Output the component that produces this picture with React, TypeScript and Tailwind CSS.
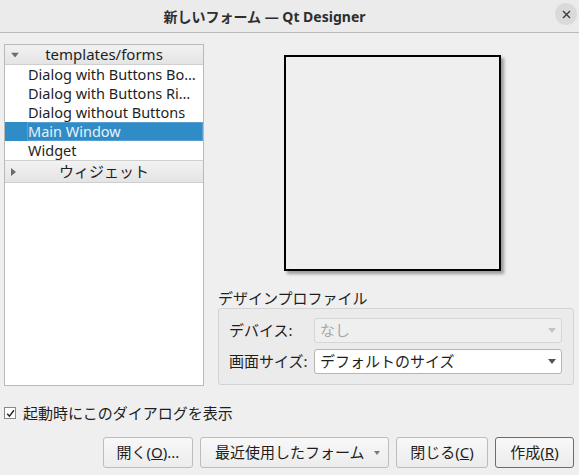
const font = { fontFamily: '"Noto Sans", "Noto Sans CJK JP", sans-serif' }

const templates = [
  'Dialog with Buttons Bo…',
  'Dialog with Buttons Ri…',
  'Dialog without Buttons',
  'Main Window',
  'Widget',
]

function Caret({ open }: { open: boolean }) {
  return open ? (
    <svg width="8" height="5" viewBox="0 0 8 5" className="text-[#6b6b6b]">
      <path d="M0 0h8L4 5z" fill="currentColor" />
    </svg>
  ) : (
    <svg width="5" height="8" viewBox="0 0 5 8" className="text-[#6b6b6b]">
      <path d="M0 0v8l5-4z" fill="currentColor" />
    </svg>
  )
}

function TreeHeader({ label, open, h }: { label: string; open: boolean; h: string }) {
  return (
    <div
      className={`relative flex items-center justify-center border-b border-[#cfcfcf] bg-gradient-to-b from-[#f2f2f2] to-[#e4e4e4] text-[15px] leading-none text-[#1e1e1e] ${h}`}
    >
      <span className="absolute left-[6px] top-1/2 flex -translate-y-1/2">
        <Caret open={open} />
      </span>
      {label}
    </div>
  )
}

function Combo({ value, disabled }: { value: string; disabled?: boolean }) {
  return (
    <div
      className={`flex h-[25px] flex-1 items-center justify-between rounded-[3px] border px-[5px] text-[15px] ${
        disabled
          ? 'border-[#d6d6d6] bg-[#efefef] text-[#a8a8a8]'
          : 'border-[#b5b5b5] bg-white text-[#1e1e1e]'
      }`}
    >
      <span>{value}</span>
      <svg width="8" height="5" viewBox="0 0 8 5" className={disabled ? 'text-[#c4c4c4]' : 'text-[#555]'}>
        <path d="M0 0h8L4 5z" fill="currentColor" />
      </svg>
    </div>
  )
}

function Button({ children, w, primary }: { children: React.ReactNode; w: string; primary?: boolean }) {
  return (
    <div
      className={`flex h-[31px] items-center justify-center rounded-[3px] border bg-gradient-to-b from-[#f8f8f8] to-[#ececec] text-[15px] text-[#1e1e1e] ${w} ${
        primary ? 'border-[#3f77a6]' : 'border-[#bcbcbc]'
      }`}
    >
      {children}
    </div>
  )
}

export default function App() {
  return (
    <div style={font} className="flex h-[475px] w-[579px] flex-col overflow-hidden bg-[#efefef] text-[#1e1e1e]">
      {/* title bar */}
      <div className="relative flex h-[33px] shrink-0 items-center justify-center border-b border-[#b9b9b9] bg-[#ebebeb] pr-[50px]">
        <span className="text-[14px] font-bold text-[#2e2e2e]">新しいフォーム — Qt Designer</span>
        <div className="absolute right-[2px] top-[3px] flex h-[22px] w-[22px] items-center justify-center rounded-full bg-[#dadada]">
          <svg width="9" height="9" viewBox="0 0 9 9">
            <path d="M1 1l7 7M8 1L1 8" stroke="#3a3a3a" strokeWidth="1.4" />
          </svg>
        </div>
      </div>

      <div className="flex flex-1 gap-[14px] pl-[4px] pr-[5px] pt-[11px]">
        {/* template tree */}
        <div className="flex h-[342px] w-[200px] shrink-0 flex-col border border-[#b9b9b9] bg-white">
          <TreeHeader label="templates/forms" open h="h-[20px]" />
          {templates.map((t) => (
            <div
              key={t}
              className={`flex h-[19px] items-center whitespace-nowrap pl-[22px] text-[14.5px] leading-none ${
                t === 'Main Window' ? 'bg-[#308cc6] text-[#e8f1f8]' : ''
              }`}
            >
              <span
                className={
                  t === 'Main Window'
                    ? 'flex h-[19px] flex-1 items-center outline outline-1 -outline-offset-1 outline-[#5a9fd0] pl-[1px]'
                    : 'pl-[1px]'
                }
              >
                {t}
              </span>
            </div>
          ))}
          <div className="border-t border-[#cfcfcf]">
            <TreeHeader label="ウィジェット" open={false} h="h-[22px]" />
          </div>
        </div>

        {/* right side */}
        <div className="flex flex-1 flex-col">
          <div className="flex h-[239px] items-start pl-[66px] pt-[11px]">
            <div className="h-[216px] w-[217px] border-2 border-black bg-[#efefef] shadow-[3px_3px_3px_rgba(0,0,0,0.35)]" />
          </div>
          <div className="mt-[6px] text-[15px] leading-[18px]">デザインプロファイル</div>
          <div className="mt-[1px] flex h-[77px] flex-col gap-[6px] rounded-[3px] border border-[#d3d3d3] bg-[#ebebeb] pl-[10px] pr-[11px] pt-[9px]">
            <div className="flex items-center">
              <span className="w-[85px] text-[15px]">デバイス:</span>
              <Combo value="なし" disabled />
            </div>
            <div className="flex items-center">
              <span className="w-[85px] text-[15px]">画面サイズ:</span>
              <Combo value="デフォルトのサイズ" />
            </div>
          </div>
        </div>
      </div>

      {/* footer */}
      <div className="flex flex-col pl-[4px] pr-[5px] pb-[7px]">
        <div className="flex h-[20px] items-center gap-[7px]">
          <div className="flex h-[12px] w-[12px] items-center justify-center border border-[#888] bg-white">
            <svg width="9" height="9" viewBox="0 0 9 9">
              <path d="M1.2 4.8l2.2 2.4L8 1.2" stroke="#222" strokeWidth="1.4" fill="none" />
            </svg>
          </div>
          <span className="text-[15px]">起動時にこのダイアログを表示</span>
        </div>
        <div className="mt-[14px] flex justify-end gap-[7px]">
          <Button w="w-[90px]">
            開く(<span className="underline">O</span>)...
          </Button>
          <Button w="w-[189px]">
            <span className="flex w-full items-center justify-between pl-[14px] pr-[8px]">
              最近使用したフォーム
              <svg width="6" height="4" viewBox="0 0 6 4">
                <path d="M0 0h6L3 4z" fill="#777" />
              </svg>
            </span>
          </Button>
          <Button w="w-[92px]">
            閉じる(<span className="underline">C</span>)
          </Button>
          <Button w="w-[79px]" primary>
            作成(<span className="underline">R</span>)
          </Button>
        </div>
      </div>
    </div>
  )
}
